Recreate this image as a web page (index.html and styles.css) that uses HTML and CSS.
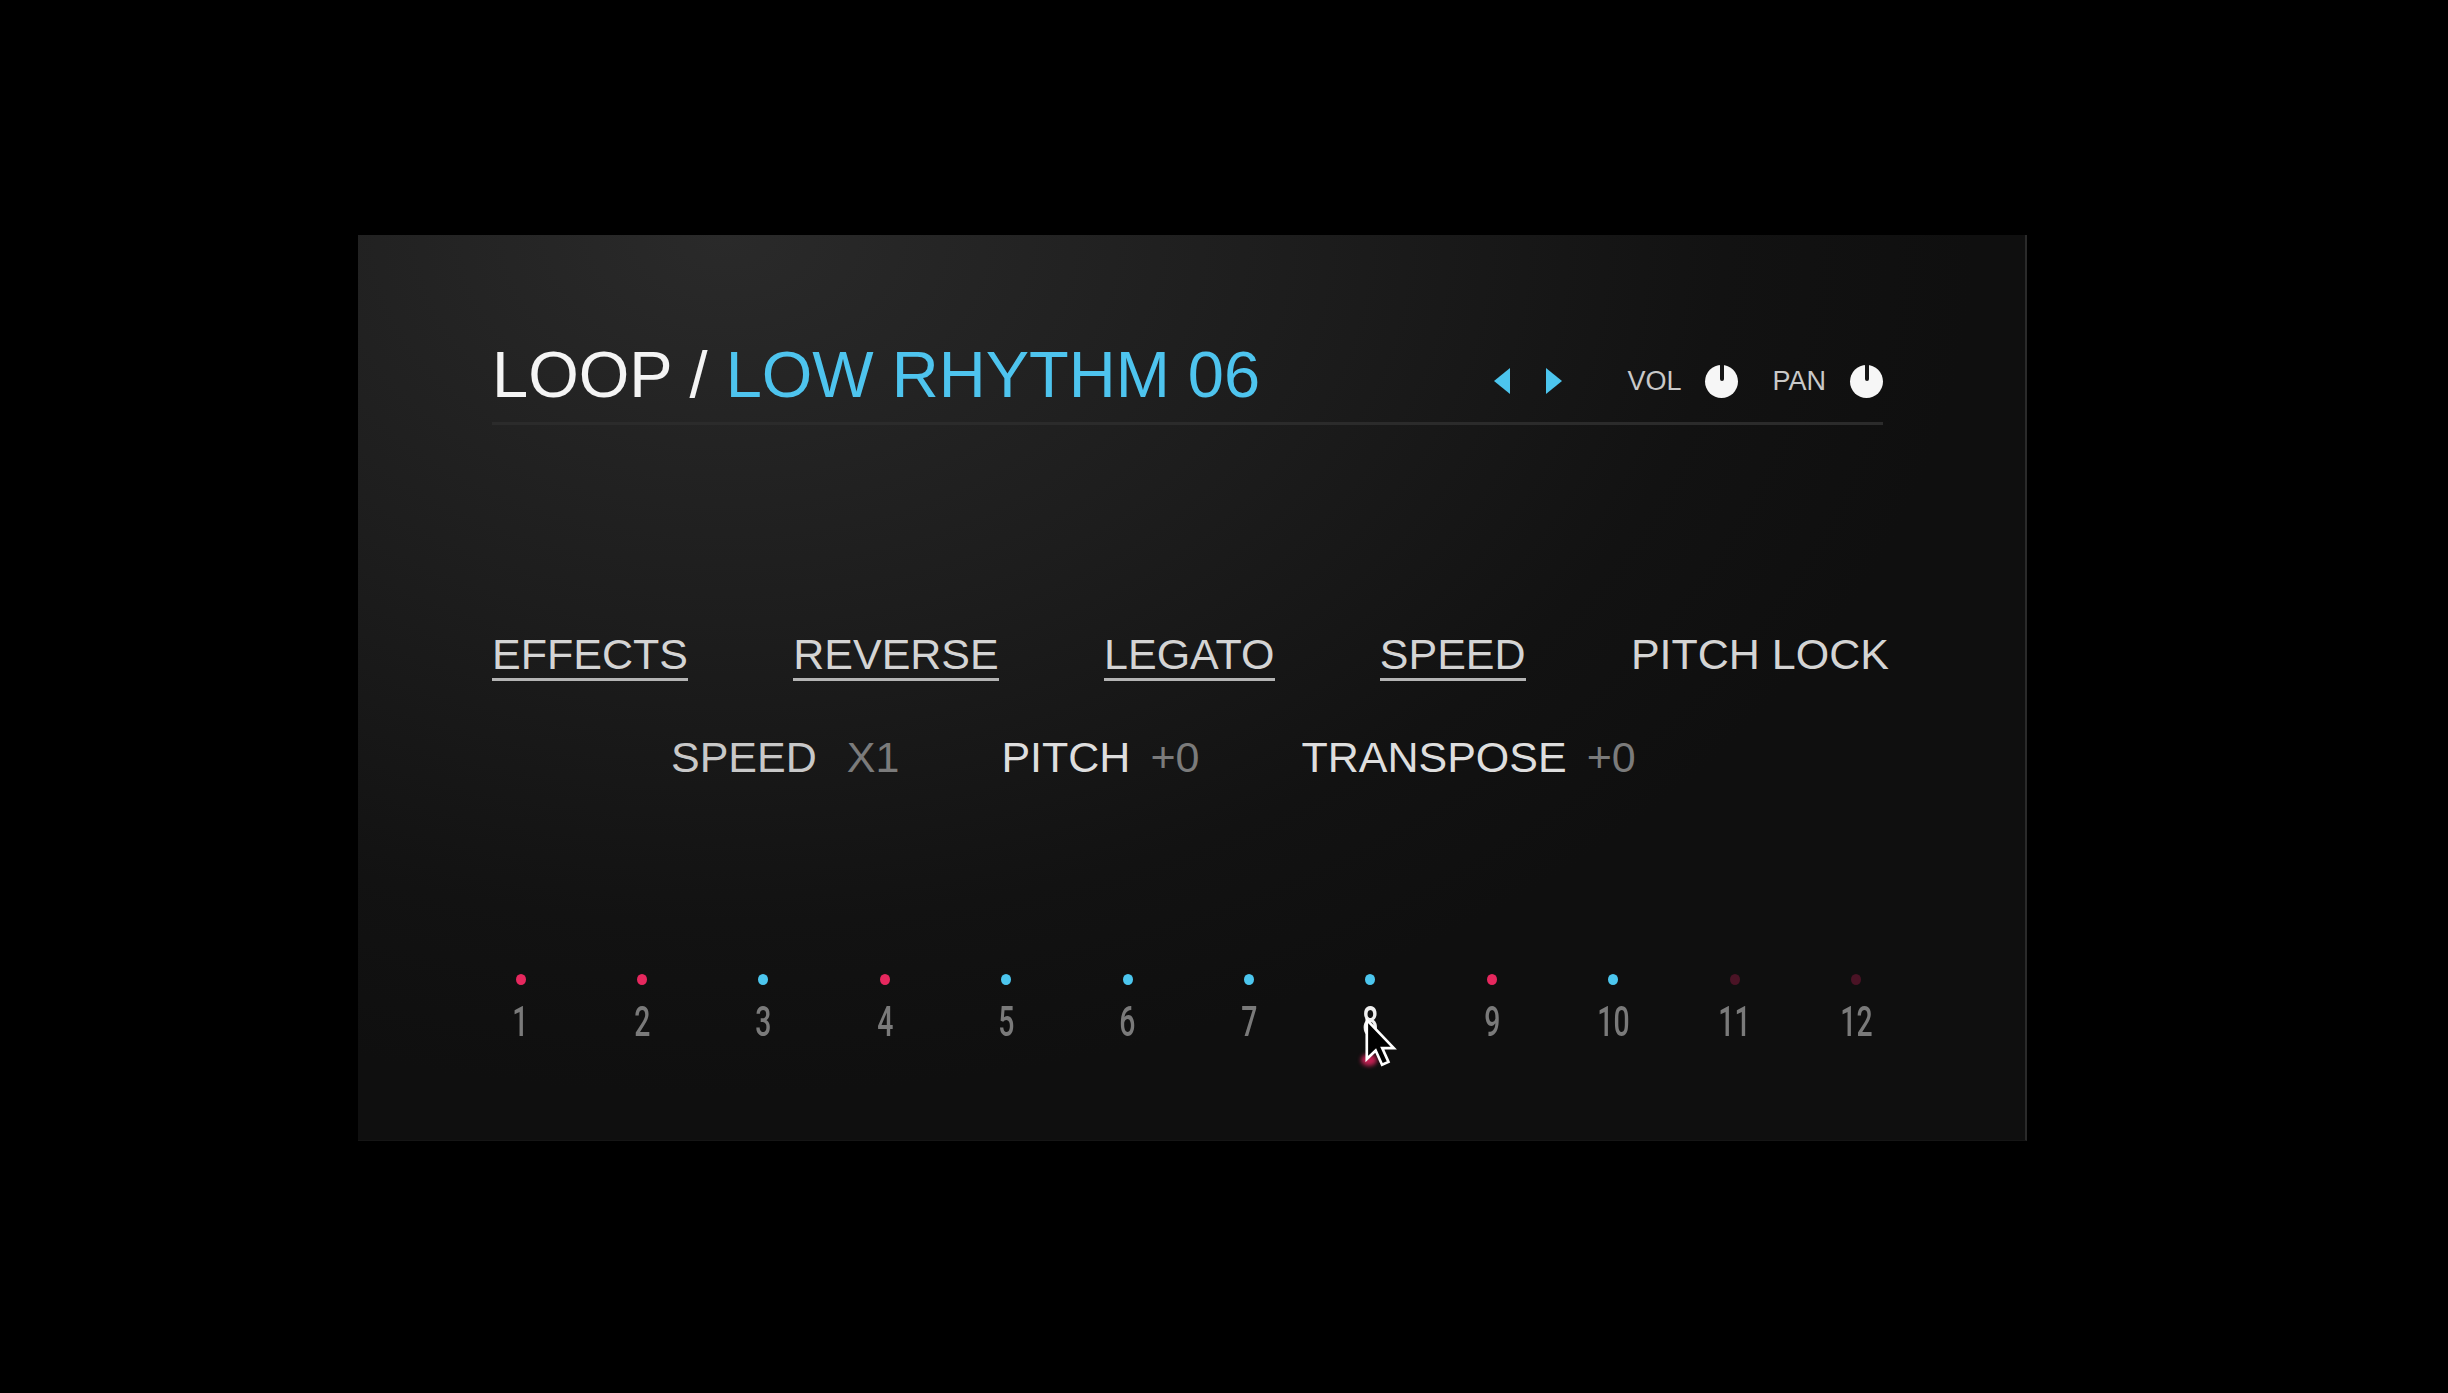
FILE: index.html
```html
<!DOCTYPE html>
<html lang="en">
<head>
<meta charset="utf-8">
<title>Loop</title>
<link rel="stylesheet" href="styles.css">
</head>
<body>
<div class="panel">
  <header class="header">
    <h1 class="title"><span class="title-main">LOOP / </span><span class="title-accent">LOW RHYTHM 06</span></h1>
    <div class="controls">
      <span class="arrow arrow-left"><svg width="16" height="26" viewBox="0 0 16 26"><polygon points="16,0 16,26 0,13" fill="#4cc5ee"/></svg></span>
      <span class="arrow arrow-right"><svg width="16" height="26" viewBox="0 0 16 26"><polygon points="0,0 0,26 16,13" fill="#4cc5ee"/></svg></span>
      <span class="ctl-label ctl-vol">VOL</span>
      <span class="knob knob-vol"></span>
      <span class="ctl-label ctl-pan">PAN</span>
      <span class="knob"></span>
    </div>
  </header>

  <nav class="tabs">
    <span class="tab underlined">EFFECTS</span>
    <span class="tab underlined">REVERSE</span>
    <span class="tab underlined">LEGATO</span>
    <span class="tab underlined">SPEED</span>
    <span class="tab">PITCH LOCK</span>
  </nav>

  <div class="params">
    <span class="param"><span class="param-label dim">SPEED</span><span class="param-value wide">X1</span></span>
    <span class="param"><span class="param-label">PITCH</span><span class="param-value">+0</span></span>
    <span class="param"><span class="param-label">TRANSPOSE</span><span class="param-value">+0</span></span>
  </div>

  <div class="steps">
    <div class="step"><span class="dot pink"></span><span class="num">1</span></div>
    <div class="step"><span class="dot pink"></span><span class="num">2</span></div>
    <div class="step"><span class="dot cyan"></span><span class="num">3</span></div>
    <div class="step"><span class="dot pink"></span><span class="num">4</span></div>
    <div class="step"><span class="dot cyan"></span><span class="num">5</span></div>
    <div class="step"><span class="dot cyan"></span><span class="num">6</span></div>
    <div class="step"><span class="dot cyan"></span><span class="num">7</span></div>
    <div class="step"><span class="dot cyan"></span><span class="num active">8</span>
      <span class="drag-blob"></span>
      <svg class="cursor" width="32" height="50" viewBox="0 0 18 28"><path d="M1 1 L1 23 L6 18.2 L9.6 26.2 L13.2 24.6 L9.7 16.9 L16.2 16.9 Z" fill="#000" stroke="#fff" stroke-width="1.5" stroke-linejoin="miter"/></svg>
    </div>
    <div class="step"><span class="dot pink"></span><span class="num">9</span></div>
    <div class="step"><span class="dot cyan"></span><span class="num">10</span></div>
    <div class="step"><span class="dot pink-dim"></span><span class="num">11</span></div>
    <div class="step"><span class="dot pink-dim"></span><span class="num">12</span></div>
  </div>
</div>
</body>
</html>
```

FILE: styles.css
```css
html, body {
  margin: 0;
  background: #000;
}

body {
  width: 2448px;
  height: 1393px;
  overflow: hidden;
  box-sizing: border-box;
  padding: 235px 0 0 358px;
  font-family: "Liberation Sans", Arial, sans-serif;
}

.panel {
  width: 1669px;
  height: 906px;
  box-sizing: border-box;
  padding: 102px 0 0 134px;
  background:
    radial-gradient(ellipse 75% 95% at 22% 0%, #2a2a2a 0%, #1d1d1d 45%, #121212 80%, #0f0f0f 100%);
  border-right: 2px solid #2a2a2a;
  border-bottom: 1px solid #151515;
}

/* header */
.header {
  width: 1391px;
  display: flex;
  justify-content: space-between;
  align-items: center;
  padding-bottom: 9px;
  border-bottom: 3px solid #2b2b2b;
}

.title {
  margin: 0;
  font-size: 65px;
  line-height: 76px;
  font-weight: 400;
  white-space: nowrap;
}

.title-main { color: #f4f4f4; }
.title-accent { color: #4ec4ee; }

.controls {
  display: flex;
  align-items: center;
  margin-top: 12px;
}

.arrow {
  display: flex;
  width: 16px;
  height: 26px;
}

.arrow-left { margin-right: 36px; }
.arrow-right { margin-right: 65px; }

.ctl-label {
  font-size: 27px;
  line-height: 30px;
  color: #c9c9c9;
}

.ctl-vol { margin-right: 24px; }
.ctl-pan { margin-right: 24px; }

.knob {
  position: relative;
  width: 33px;
  height: 33px;
  border-radius: 50%;
  background: #f6f6f6;
}

.knob-vol { margin-right: 34px; }

.knob::after {
  content: "";
  position: absolute;
  left: 14.5px;
  top: 0;
  width: 4px;
  height: 16px;
  background: #151515;
  border-radius: 0 0 2px 2px;
}

/* tabs */
.tabs {
  width: 1397px;
  display: flex;
  justify-content: space-between;
  margin-top: 208px;
}

.tab {
  font-size: 43px;
  line-height: 43px;
  color: #d4d4d4;
  padding-bottom: 2px;
  border-bottom: 3px solid transparent;
  white-space: nowrap;
}

.tab.underlined { border-bottom-color: #b4b4b4; }

/* params */
.params {
  display: flex;
  margin-top: 55px;
  padding-left: 179px;
}

.param {
  display: flex;
  font-size: 43px;
  line-height: 43px;
  margin-right: 102px;
  white-space: nowrap;
}

.param-label { color: #dedede; }
.param-label.dim { color: #c8c8c8; }
.param-value { color: #7b7b7b; margin-left: 20px; }
.param-value.wide { margin-left: 30px; }

/* steps */
.steps {
  display: grid;
  grid-template-columns: repeat(12, 121.4px);
  margin-top: 195px;
  margin-left: -32px;
}

.step {
  position: relative;
  display: flex;
  flex-direction: column;
  align-items: center;
}

.dot {
  width: 10px;
  height: 11px;
  border-radius: 50%;
  margin-bottom: 15px;
}

.dot.pink { background: #e6285e; }
.dot.cyan { background: #4cc6ee; }
.dot.pink-dim { background: #4a1325; }

.num {
  display: inline-block;
  font-family: Roboto, "Liberation Sans", sans-serif;
  font-weight: 500;
  font-size: 43px;
  line-height: 43px;
  color: #7a7a7a;
  transform: scaleX(0.66);
}

.num.active { color: #f0f0f0; }

.drag-blob {
  position: absolute;
  left: calc(50% - 9px);
  top: 80px;
  width: 16px;
  height: 12px;
  border-radius: 50%;
  background: #e0245e;
  filter: blur(2px);
  opacity: 0.85;
}

.cursor {
  position: absolute;
  left: calc(50% - 5px);
  top: 44px;
}
```
